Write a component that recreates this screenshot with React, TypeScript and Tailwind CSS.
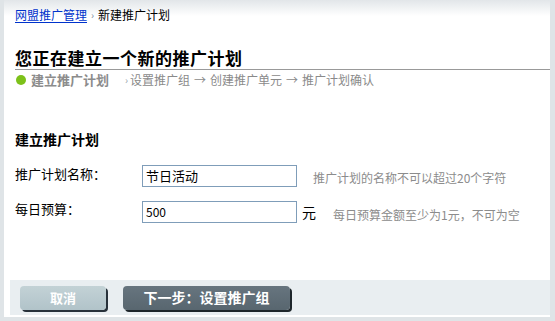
import React from "react";

export default function App() {
  const font = { fontFamily: '"Noto Sans CJK SC", "Liberation Sans", sans-serif' };
  return (
    <div className="w-[555px] h-[321px] bg-[#dfe4e7] overflow-hidden" style={font}>
      <div className="ml-[4px] w-[546px] h-[317px] flex flex-col bg-[linear-gradient(to_bottom,#e2e6e9_0px,#ffffff_16px)]">
        <div className="pl-[11px]">
          <div className="pt-[7px] h-[23px] text-[12px] leading-[16px] flex items-center text-black">
            <a href="#" className="text-[#0033cc] underline underline-offset-2">网盟推广管理</a>
            <span className="text-[#7a8a99] text-[10px] mx-[4px]">›</span>
            <span>新建推广计划</span>
          </div>
          <div className="mt-[26px] h-[21px] pb-[4px] border-b border-[#999999] text-[17px] leading-[17px] font-bold text-black tracking-[0.5px]">
            您正在建立一个新的推广计划
          </div>
          <div className="h-[17px] flex items-center text-[12px] leading-[16px] text-[#8a8a8a] mt-[1px]">
            <span className="w-[10px] h-[10px] rounded-full bg-[#7dc11a] ml-[1px] mr-[5px]"></span>
            <span className="font-bold text-[13px] text-[#8c8c8c]">建立推广计划</span>
            <span className="ml-[16px] text-[10px] text-[#9aa4ad] mr-[2px]">›</span>
            <span>设置推广组</span>
            <span className="mx-[4px]">→</span>
            <span>创建推广单元</span>
            <span className="mx-[4px]">→</span>
            <span>推广计划确认</span>
          </div>
          <div className="mt-[43px] text-[14px] leading-[16px] font-bold text-black">建立推广计划</div>
          <div className="mt-[18px] flex items-center h-[22px]">
            <div className="w-[127px] text-[13px] text-black pb-[5px]">推广计划名称：</div>
            <div className="w-[155px] h-[22px] border border-[#7f9db9] bg-white text-[13px] leading-[20px] pl-[3px] text-black">节日活动</div>
            <div className="ml-[16px] text-[12px] text-[#8c8c8c] pt-[3px]">推广计划的名称不可以超过20个字符</div>
          </div>
          <div className="mt-[14px] flex items-center h-[22px]">
            <div className="w-[127px] text-[13px] text-black pb-[7px]">每日预算：</div>
            <div className="w-[155px] h-[22px] border border-[#7f9db9] bg-white text-[12px] leading-[20px] pl-[3px] text-black">500</div>
            <div className="ml-[5px] text-[14px] text-black">元</div>
            <div className="ml-[17px] text-[12px] text-[#8c8c8c] pt-[5px]">每日预算金额至少为1元，不可为空</div>
          </div>
        </div>
        <div className="mt-auto mb-[2px] ml-[6px] h-[35px] bg-[#e9eef1] flex items-center pl-[10px] gap-[17px]">
          <div className="w-[86px] h-[24px] rounded-[4px] bg-[linear-gradient(to_bottom,#c3d2d6,#b1c3c9)] shadow-[2px_2px_0_#27313a] flex items-center justify-center text-white font-bold text-[13px]">
            取消
          </div>
          <div className="w-[167px] h-[24px] rounded-[4px] bg-[linear-gradient(to_bottom,#67757f,#58666f)] shadow-[2px_2px_0_#1e262b] flex items-center justify-center text-white font-bold text-[14px]">
            下一步：设置推广组
          </div>
        </div>
      </div>
    </div>
  );
}
